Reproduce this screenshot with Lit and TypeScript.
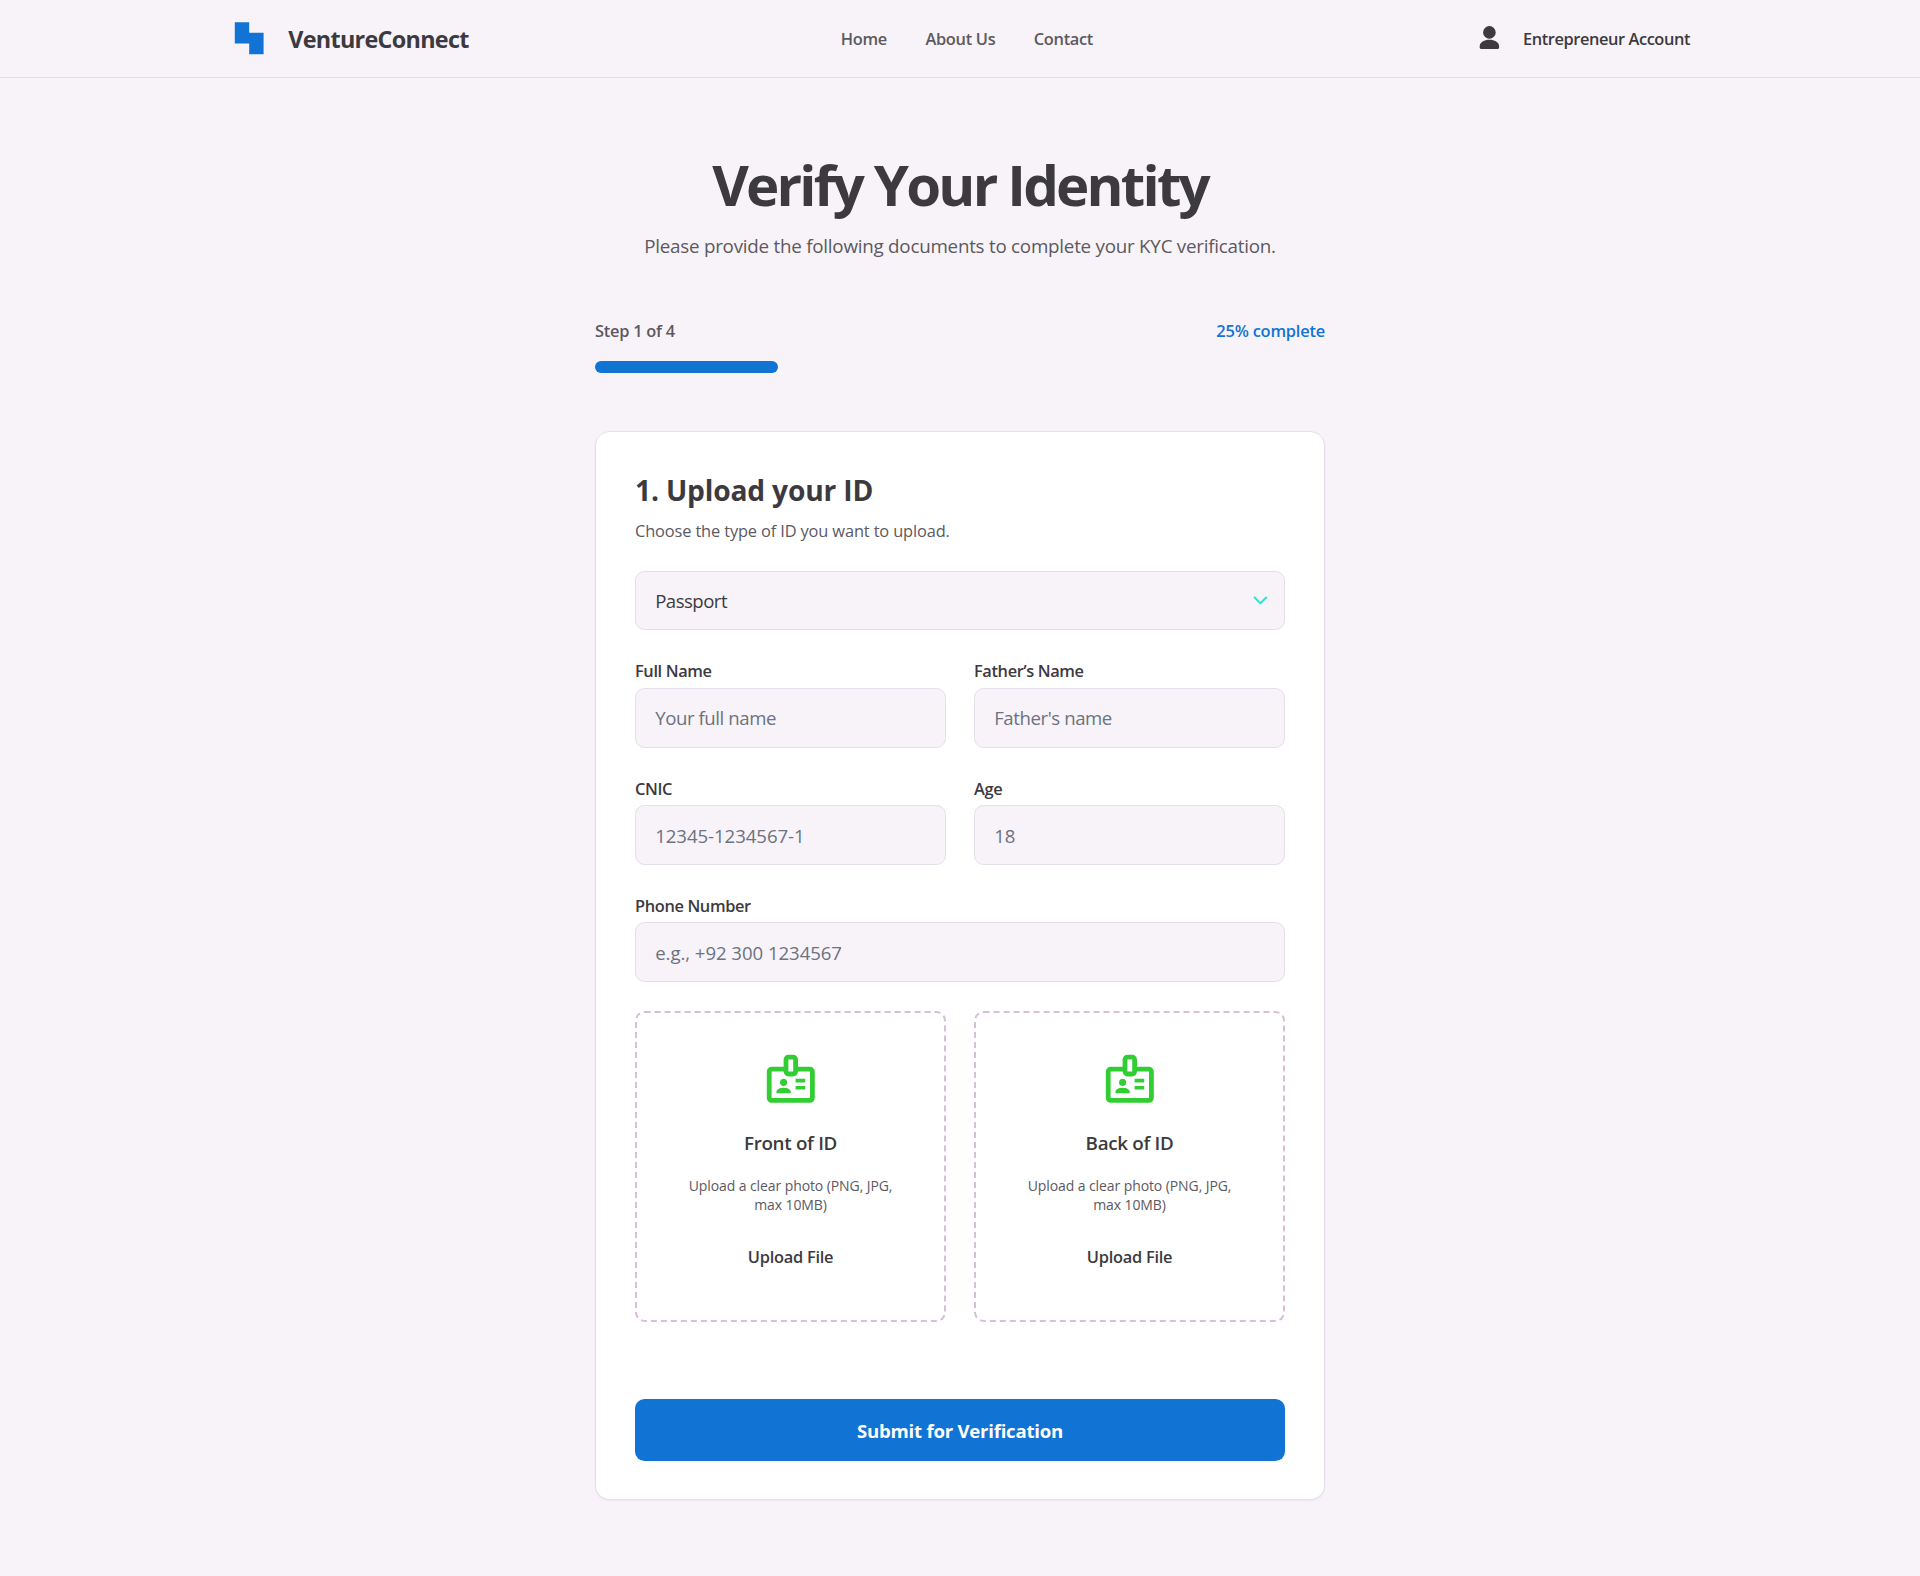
import { LitElement, css, html, svg } from 'lit';

const idIcon = svg`
  <path
    d="M160-80q-33 0-56.5-23.5T80-160v-440q0-33 23.5-56.5T160-680h200v-120q0-33 23.5-56.5T440-880h80q33 0 56.5 23.5T600-800v120h200q33 0 56.5 23.5T880-600v440q0 33-23.5 56.5T800-80H160Zm0-80h640v-440H600q0 33-23.5 56.5T520-520h-80q-33 0-56.5-23.5T360-600H160v440Zm80-80h240v-18q0-17-9.5-31.5T444-312q-20-9-40.5-13.5T360-330q-23 0-43.5 4.5T276-312q-17 8-26.5 22.5T240-258v18Zm320-60h160v-60H560v60Zm-200-60q25 0 42.5-17.5T420-420q0-25-17.5-42.5T360-480q-25 0-42.5 17.5T300-420q0 25 17.5 42.5T360-360Zm200-60h160v-60H560v60ZM440-600h80v-200h-80v200Z"
  />
`;

export class UploadBox extends LitElement {
  static properties = {
    heading: { type: String },
  };

  declare heading: string;

  static styles = css`
    :host {
      display: flex;
      flex-direction: column;
      align-items: center;
      box-sizing: border-box;
      height: 311px;
      padding: 37.4px 44px;
      border: 2px dashed #d8bfd8;
      border-radius: 9.6px;
      text-align: center;
    }
    .icon {
      width: 57.6px;
      height: 57.6px;
      fill: #32cd32;
    }
    .heading {
      margin: 20.6px 0 19.6px;
      font-size: 18.8px;
      font-weight: 600;
      line-height: 28px;
      letter-spacing: -0.3px;
    }
    .hint {
      margin: 0 0 30.5px;
      color: #5c595f;
      font-size: 14px;
      line-height: 19.2px;
      letter-spacing: -0.09px;
    }
    .action {
      padding: 0;
      border: 0;
      background: none;
      color: inherit;
      font: 600 16.4px/24px 'Open Sans', sans-serif;
      letter-spacing: -0.25px;
      cursor: pointer;
    }
  `;

  render() {
    return html`
      <svg class="icon" viewBox="0 -960 960 960">${idIcon}</svg>
      <p class="heading">${this.heading}</p>
      <p class="hint">Upload a clear photo (PNG, JPG, max 10MB)</p>
      <button class="action">Upload File</button>
    `;
  }
}

customElements.define('upload-box', UploadBox);

export class AppRoot extends LitElement {
  static properties = {
    progress: { type: Number },
  };

  declare progress: number;

  constructor() {
    super();
    this.progress = 25;
  }

  static styles = css`
    :host {
      display: block;
      box-sizing: border-box;
      min-height: 1576px;
      background: #f8f3f9;
      color: #3c3a3f;
      font-family: 'Open Sans', 'Noto Sans', sans-serif;
    }
    * {
      box-sizing: border-box;
    }

    header {
      display: flex;
      align-items: center;
      justify-content: space-between;
      height: 78px;
      padding: 0 230px;
      border-bottom: 1px solid #e3dee6;
    }
    .brand {
      display: flex;
      align-items: center;
      gap: 19.8px;
      font-size: 23.4px;
      font-weight: 700;
      letter-spacing: -0.71px;
    }
    .name {
      padding-top: 1px;
    }
    .logo {
      width: 38.4px;
      height: 38.4px;
      fill: #1173d4;
    }
    nav {
      display: flex;
      gap: 38.4px;
      margin-right: 10px;
      color: #5c595f;
      font-size: 16.4px;
      font-weight: 600;
      letter-spacing: -0.3px;
    }
    nav a {
      color: inherit;
      text-decoration: none;
    }
    .account {
      display: flex;
      align-items: center;
      gap: 19.2px;
      font-size: 16.4px;
      font-weight: 600;
      letter-spacing: -0.42px;
    }
    .person {
      width: 28.8px;
      height: 28.8px;
      fill: #3c3a3f;
    }

    main {
      width: 730px;
      margin: 0 auto;
      padding-top: 78.5px;
    }
    h1 {
      margin: 0 0 19px;
      font-size: 56.4px;
      font-weight: 700;
      line-height: 56px;
      letter-spacing: -2.8px;
      text-align: center;
    }
    .lead {
      margin: 0 0 59px;
      color: #5c595f;
      font-size: 18.8px;
      line-height: 28px;
      letter-spacing: -0.24px;
      text-align: center;
    }
    .status {
      display: flex;
      justify-content: space-between;
      color: #5c595f;
      font-size: 16.4px;
      font-weight: 600;
      line-height: 24px;
      letter-spacing: -0.25px;
    }
    .percent {
      color: #1173d4;
      letter-spacing: -0.2px;
    }
    .track {
      height: 12px;
      margin: 18.4px 0 58px;
      border-radius: 6px;
    }
    .bar {
      height: 100%;
      border-radius: 6px;
      background: #1173d4;
    }

    .card {
      padding: 39px 39px 38px;
      border: 1px solid #e6deeb;
      border-radius: 14.4px;
      background: #fff;
      box-shadow: 0 1px 2px rgb(0 0 0 / 5%);
    }
    h2 {
      margin: 0 0 9px;
      font-size: 28.2px;
      font-weight: 700;
      line-height: 39px;
      letter-spacing: -0.18px;
    }
    .note {
      margin: 0 0 28px;
      color: #5c595f;
      font-size: 16.4px;
      line-height: 24px;
      letter-spacing: -0.14px;
    }
    .grid {
      display: grid;
      grid-template-columns: 1fr 1fr;
      gap: 29px 28px;
    }
    .wide {
      grid-column: 1 / -1;
    }
    .field {
      display: flex;
      flex-direction: column;
      gap: 4px;
      font-size: 16.4px;
      font-weight: 600;
      line-height: 24.6px;
      letter-spacing: -0.37px;
    }
    input,
    select {
      width: 100%;
      height: 59.6px;
      margin: 0;
      padding: 0 19.2px;
      border: 1px solid #e6deeb;
      border-radius: 9.6px;
      background: #f8f3f9;
      color: #3c3a3f;
      font: 400 18.6px 'Open Sans', 'Noto Sans', sans-serif;
      letter-spacing: -0.42px;
      appearance: none;
    }
    select {
      letter-spacing: -0.52px;
    }
    input::placeholder {
      color: #6b7280;
    }
    .digits {
      letter-spacing: -0.05px;
    }
    .picker {
      display: grid;
      align-items: center;
    }
    .picker > * {
      grid-area: 1 / 1;
    }
    .chevron {
      justify-self: end;
      width: 28.8px;
      height: 28.8px;
      margin-right: 10px;
      pointer-events: none;
    }
    .submit {
      display: block;
      width: 100%;
      height: 62px;
      margin-top: 77px;
      border: 0;
      border-radius: 9.6px;
      background: #1173d4;
      color: #fff;
      font: 700 18.6px 'Open Sans', 'Noto Sans', sans-serif;
      letter-spacing: -0.24px;
    }
  `;

  field(label: string, placeholder: string, classes = '') {
    return html`
      <label class="field ${classes}">
        ${label}
        <input class=${/\d/.test(placeholder) ? 'digits' : ''} placeholder=${placeholder} />
      </label>
    `;
  }

  render() {
    return html`
      <header>
        <div class="brand">
          <svg class="logo" viewBox="0 0 48 48">
            <path d="M24 4H6v26.67h18V44h18V17.33H24V4Z" />
          </svg>
          <span class="name">VentureConnect</span>
        </div>
        <nav>
          <a href="#">Home</a>
          <a href="#">About Us</a>
          <a href="#">Contact</a>
        </nav>
        <div class="account">
          <svg class="person" viewBox="0 0 28.8 28.8">
            <circle cx="14.4" cy="8.4" r="6.3" />
            <path d="M4.7 22.4c0-4.2 4.6-6.6 9.7-6.6s9.7 2.4 9.7 6.6v1.2c0 .8-.5 1.3-1.3 1.3H6c-.8 0-1.3-.5-1.3-1.3Z" />
          </svg>
          Entrepreneur Account
        </div>
      </header>

      <main>
        <h1>Verify Your Identity</h1>
        <p class="lead">Please provide the following documents to complete your KYC verification.</p>

        <div class="status">
          <span>Step 1 of 4</span>
          <span class="percent">${this.progress}% complete</span>
        </div>
        <div class="track">
          <div class="bar" style="width: ${this.progress}%"></div>
        </div>

        <section class="card">
          <h2>1. Upload your ID</h2>
          <p class="note">Choose the type of ID you want to upload.</p>
          <div class="grid">
            <div class="picker wide">
              <select>
                <option>Passport</option>
              </select>
              <svg class="chevron" viewBox="0 0 20 20" fill="none">
                <path
                  d="m6 8 4 4 4-4"
                  stroke="#40e0d0"
                  stroke-width="1.5"
                  stroke-linecap="round"
                  stroke-linejoin="round"
                />
              </svg>
            </div>
            ${this.field('Full Name', 'Your full name')}
            ${this.field('Father’s Name', "Father's name")}
            ${this.field('CNIC', '12345-1234567-1')}
            ${this.field('Age', '18')}
            ${this.field('Phone Number', 'e.g., +92 300 1234567', 'wide')}
            <upload-box heading="Front of ID"></upload-box>
            <upload-box heading="Back of ID"></upload-box>
          </div>
          <button class="submit">Submit for Verification</button>
        </section>
      </main>
    `;
  }
}

declare global {
  interface HTMLElementTagNameMap {
    'app-root': AppRoot;
    'upload-box': UploadBox;
  }
}

customElements.define('app-root', AppRoot);
